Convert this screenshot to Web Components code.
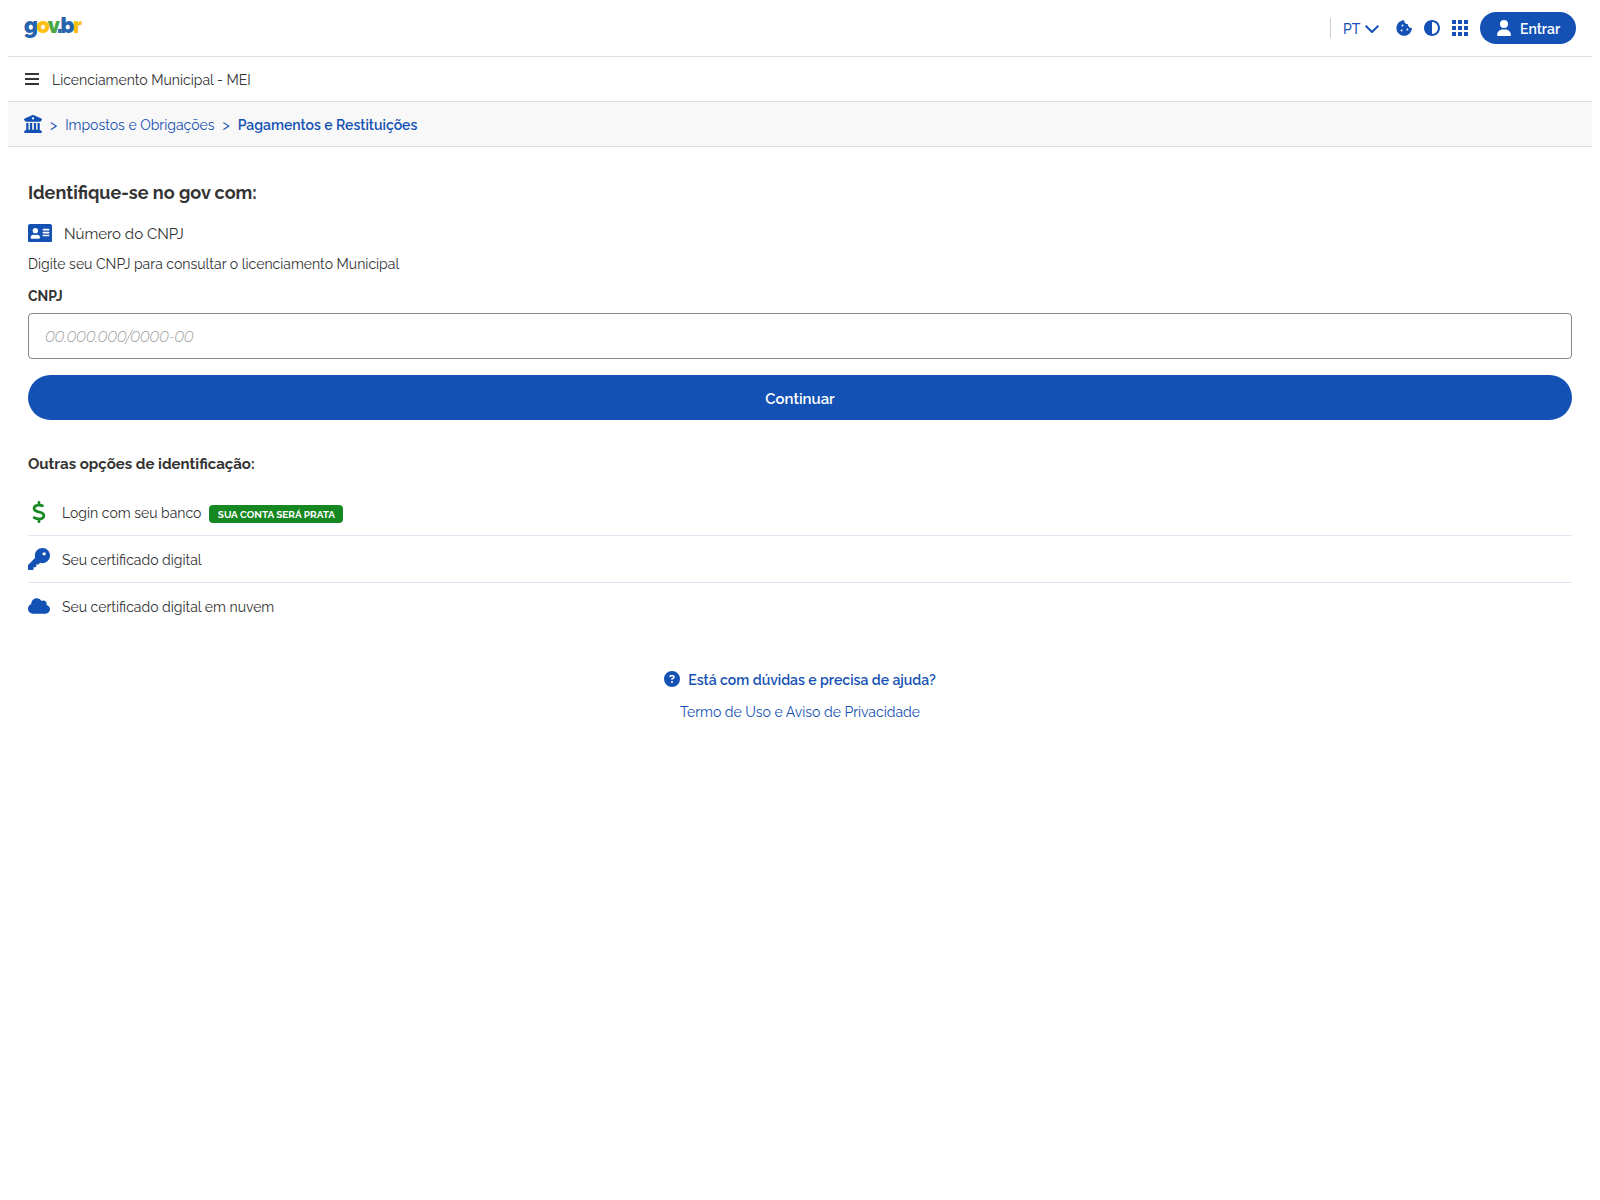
<!DOCTYPE html>
<html lang="pt-BR">
<head>
<meta charset="utf-8">
<title>Licenciamento Municipal - MEI</title>
<style>
    body {
        margin: 0 8px;
        background: #fff;
        color: #333;
        font-family: Raleway, Lato, "Open Sans", sans-serif;
        font-size: 14px;
        line-height: 20px;
        --blue: #1351b4;
        --green: #168821;
    }
</style>
</head>
<body>
<gov-header></gov-header>
<gov-title>Licenciamento Municipal - MEI</gov-title>
<gov-breadcrumb></gov-breadcrumb>
<gov-login></gov-login>
<gov-help></gov-help>

<script>
// viewBox + path of every icon used on the page
const ICONS = {
    bank: ['0 0 512 512', 'M243.4 2.6l-224 96c-14 6-21.8 21-18.7 35.8S16.8 160 32 160v8c0 13.3 10.7 24 24 24H456c13.3 0 24-10.7 24-24v-8c15.2 0 28.3-10.7 31.3-25.6s-4.8-29.9-18.7-35.8l-224-96c-8-3.4-17.2-3.4-25.2 0zM128 224H64V420.3c-.6 .3-1.2 .7-1.8 1.1l-48 32c-11.7 7.8-17 22.4-12.9 35.9S17.9 512 32 512H480c14.1 0 26.5-9.2 30.6-22.7s-1.1-28.1-12.9-35.9l-48-32c-.6-.4-1.2-.7-1.8-1.1V224H384V416H344V224H280V416H232V224H168V416H128V224zM256 64a32 32 0 1 1 0 64 32 32 0 1 1 0-64z'],
    menu: ['0 0 14 12', 'M0 0h14v2H0zM0 5h14v2H0zM0 10h14v2H0z'],
    cookie: ['-8 -8 528 528', 'M510.4 255.8c-69.1-.9-124.8-57.1-124.8-126.4-69.3 0-125.5-55.7-126.4-124.8-26.9-4.2-54.6.3-79 12.8l-69.1 35.2a132 132 0 0 0-57.8 57.9l-35.1 68.9a132.800 132.800 0 0 0-12.700 81.300l12.100 76.300a131.900 131.900 0 0 0 37.200 72.900l54.600 54.600a131.800 131.800 0 0 0 72.700 37.100l76.700 12.100a131.900 131.900 0 0 0 80.800-12.800l69.100-35.200a132 132 0 0 0 57.800-57.800l35.100-68.900a132.600 132.600 0 0 0 12.800-79.200zM176 368a32 32 0 1 1 0-64 32 32 0 0 1 0 64zm32-160a32 32 0 1 1 0-64 32 32 0 0 1 0 64zm160 128a32 32 0 1 1 0-64 32 32 0 0 1 0 64z'],
    contrast: ['8 8 496 496', 'M8 256c0 137 111 248 248 248s248-111 248-248S393 8 256 8 8 119 8 256zm248 184V72c101.700 0 184 82.300 184 184 0 101.700-82.300 184-184 184z'],
    grid: ['0 0 16 16', 'M0 0h4v4H0zM6 0h4v4H6zM12 0h4v4h-4zM0 6h4v4H0zM6 6h4v4H6zM12 6h4v4h-4zM0 12h4v4H0zM6 12h4v4H6zM12 12h4v4h-4z'],
    user: ['0 0 448 512', 'M224 256a128 128 0 1 0 0-256 128 128 0 1 0 0 256zm-45.700 48C79.800 304 0 383.800 0 482.300 0 498.700 13.300 512 29.700 512h388.600c16.400 0 29.700-13.300 29.700-29.700 0-98.500-79.800-178.300-178.300-178.300z'],
    card: ['0 0 576 448', 'M528 0H48C21.500 0 0 21.500 0 48v352c0 26.500 21.500 48 48 48h480c26.500 0 48-21.500 48-48V48c0-26.500-21.500-48-48-48zM176 96a64 64 0 1 1 0 128 64 64 0 0 1 0-128zm112 236.800c0 10.600-10 19.200-22.400 19.200H86.400C74 352 64 343.400 64 332.800v-19.200c0-31.800 30.100-57.600 67.200-57.600h5a103 103 0 0 0 79.600 0h5c37.100 0 67.200 25.800 67.200 57.600zM512 284a12 12 0 0 1-12 12H364a12 12 0 0 1-12-12v-16a12 12 0 0 1 12-12h136a12 12 0 0 1 12 12zm0-70a12 12 0 0 1-12 12H364a12 12 0 0 1-12-12v-16a12 12 0 0 1 12-12h136a12 12 0 0 1 12 12zm0-70a12 12 0 0 1-12 12H364a12 12 0 0 1-12-12v-16a12 12 0 0 1 12-12h136a12 12 0 0 1 12 12z'],
    dollar: ['0 0 320 512', 'M160 0c17.700 0 32 14.300 32 32v35.700c1.600.2 3.100.4 4.700.7.400.1.700.1 1.100.2l48 8.800c17.400 3.200 28.900 19.900 25.700 37.200s-19.900 28.900-37.200 25.700l-47.500-8.700c-31.300-4.600-58.900-1.500-78.300 6.200s-27.200 18.300-29 28.100c-2 10.700-.5 16.700 1.200 20.400 1.800 3.900 5.500 8.300 12.800 13.200 16.300 10.700 41.300 17.700 73.700 26.300l2.900.8c28.600 7.600 63.600 16.800 89.600 33.800 14.200 9.300 27.600 21.900 35.900 39.500 8.500 17.900 10.300 37.900 6.400 59.200-6.900 38-33.100 63.400-65.600 76.700-13.700 5.600-28.600 9.200-44.400 11V480c0 17.700-14.300 32-32 32s-32-14.300-32-32v-34.900c-.4-.1-.9-.1-1.300-.2h-.2c-24.400-3.800-64.500-14.300-91.500-26.300-16.100-7.200-23.400-26.100-16.200-42.200s26.100-23.400 42.200-16.200c20.900 9.300 55.300 18.500 75.200 21.600 31.900 4.700 58.200 2 76-5.300 16.900-6.900 24.600-16.900 26.800-28.900 1.900-10.600.4-16.700-1.300-20.400-1.900-4-5.600-8.400-13-13.300-16.400-10.700-41.500-17.700-74-26.300l-2.800-.7c-28.500-7.700-63.500-17-89.500-34-14.200-9.300-27.500-22-35.800-39.600-8.400-17.900-10.100-37.900-6.100-59.200C23.700 116 52.300 91.200 84.800 78.300c13.300-5.300 27.900-8.900 43.200-11V32c0-17.700 14.300-32 32-32z'],
    key: ['0 0 512 512', 'M336 352c97.200 0 176-78.800 176-176S433.200 0 336 0 160 78.800 160 176c0 18.700 2.900 36.800 8.300 53.700L7 391c-4.500 4.500-7 10.600-7 17v80c0 13.300 10.700 24 24 24h80c13.300 0 24-10.700 24-24v-40h40c13.300 0 24-10.700 24-24v-40h40c6.400 0 12.500-2.500 17-7l33.300-33.300c16.900 5.400 35 8.300 53.700 8.300zM376 96a40 40 0 1 1 0 80 40 40 0 1 1 0-80z'],
    cloud: ['0 0 640 448', 'M537.600 194.600c4.100-10.700 6.400-22.400 6.400-34.600 0-53-43-96-96-96-19.700 0-38.100 6-53.300 16.200C367 32.200 315.300 0 256 0 167.600 0 96 71.600 96 160c0 2.700.1 5.400.2 8.100C40.200 187.800 0 241.200 0 304c0 79.500 64.500 144 144 144h368c70.700 0 128-57.300 128-128 0-61.900-44-113.600-102.400-125.400z'],
    help: ['0 0 512 512', 'M256 0a256 256 0 1 0 0 512 256 256 0 0 0 0-512zM169.800 165.300c7.900-22.300 29.100-37.300 52.800-37.300h58.300c34.900 0 63.100 28.300 63.100 63.100 0 22.600-12.100 43.500-31.700 54.800L280 264.400c-.2 13-10.900 23.600-24 23.600-13.300 0-24-10.700-24-24v-13.500c0-8.600 4.600-16.500 12.100-20.800l44.300-25.400c4.700-2.700 7.600-7.700 7.600-13.100 0-8.400-6.800-15.100-15.100-15.100h-58.300c-3.400 0-6.400 2.100-7.500 5.300l-.4 1.200c-4.400 12.500-18.200 19-30.600 14.600s-19-18.200-14.600-30.600zM256 320a32 32 0 1 1 0 64 32 32 0 0 1 0-64z'],
};

/* <gov-icon name="..."> takes its size from the width/height set on it */
class GovIcon extends HTMLElement {
    constructor() {
        super();
        this.attachShadow({ mode: 'open' });
    }

    connectedCallback() {
        const [box, path] = ICONS[this.getAttribute('name')];
        this.shadowRoot.innerHTML = `
            <style>
                :host { display: block; flex: none; }
                svg { display: block; width: 100%; height: 100%; fill: currentColor; }
            </style>
            <svg viewBox="${box}"><path fill-rule="evenodd" d="${path}"/></svg>
        `;
    }
}

class GovHeader extends HTMLElement {
    constructor() {
        super();
        this.attachShadow({ mode: 'open' });
        this.shadowRoot.innerHTML = `
            <style>
                :host {
                    display: flex;
                    align-items: center;
                    height: 56px;
                    padding: 0 16px;
                    border-bottom: 1px solid #e0e0e0;
                    color: var(--blue);
                }
                .logo {
                    font-weight: 900;
                    font-size: 21.5px;
                    line-height: 28px;
                    letter-spacing: -1.5px;
                    margin: 0 auto 4px 0;
                    color: #2864ae;
                }
                .logo .y { color: #fdc010; }
                .logo .g { color: #4aa846; }
                .logo .dot { margin: 0 -0.5px 0 -1.3px; }
                .divider { width: 1px; height: 20px; background: #ccc; margin-right: 12px; }
                .lang { width: 17px; margin-top: 2px; font-weight: 500; }
                .chevron {
                    width: 14px; height: 8px; margin: 1px 17px 0 5px;
                    fill: none; stroke: currentColor; stroke-width: 2;
                }
                gov-icon { width: 16px; height: 16px; margin-right: 12px; }
                button {
                    display: flex;
                    align-items: center;
                    width: 96px;
                    height: 32px;
                    padding: 0 0 0 17px;
                    border: 0;
                    border-radius: 16px;
                    background: var(--blue);
                    color: #fff;
                    font: 600 14px/20px Raleway, Lato, sans-serif;
                }
                button gov-icon { width: 14px; margin-right: 9px; }
                button span { margin-top: 2px; }
            </style>
            <div class="logo"><span>g</span><span class="y">o</span><span class="g">v</span><span class="dot">.</span><span>b</span><span class="y">r</span></div>
            <div class="divider"></div>
            <span class="lang">PT</span>
            <svg class="chevron" viewBox="0 0 14 8"><path d="M.7.700 7 7 13.300.7"/></svg>
            <gov-icon name="cookie"></gov-icon>
            <gov-icon name="contrast"></gov-icon>
            <gov-icon name="grid"></gov-icon>
            <button><gov-icon name="user"></gov-icon><span>Entrar</span></button>
        `;
    }
}

class GovTitle extends HTMLElement {
    constructor() {
        super();
        this.attachShadow({ mode: 'open' });
        this.shadowRoot.innerHTML = `
            <style>
                :host {
                    display: flex;
                    align-items: center;
                    height: 44px;
                    padding: 0 17px;
                    border-bottom: 1px solid #e0e0e0;
                }
                gov-icon { width: 14px; height: 12px; margin-right: 13px; }
                span { margin-top: 2px; }
            </style>
            <gov-icon name="menu"></gov-icon>
            <span><slot></slot></span>
        `;
    }
}

class GovBreadcrumb extends HTMLElement {
    constructor() {
        super();
        this.attachShadow({ mode: 'open' });
        this.shadowRoot.innerHTML = `
            <style>
                :host {
                    display: flex;
                    align-items: center;
                    height: 44px;
                    padding: 0 16px;
                    border-bottom: 1px solid #e0e0e0;
                    background: #f8f8f8;
                    color: var(--blue);
                }
                gov-icon { width: 18px; height: 18px; }
                i, b, span { margin-top: 2px; }
                i { font-style: normal; margin-left: 8px; margin-right: 8px; }
                b { font-weight: 600; }
            </style>
            <gov-icon name="bank"></gov-icon>
            <i>&gt;</i><span>Impostos e Obrigações</span><i>&gt;</i><b>Pagamentos e Restituições</b>
        `;
    }
}

/* one line of the list of other ways to sign in */
class GovOption extends HTMLElement {
    constructor() {
        super();
        this.attachShadow({ mode: 'open' });
    }

    connectedCallback() {
        const badge = this.getAttribute('badge');
        this.shadowRoot.innerHTML = `
            <style>
                :host {
                    display: flex;
                    align-items: center;
                    height: 46px;
                    border-bottom: 1px solid #dfe6f1;
                    color: var(--blue);
                }
                :host(:last-of-type) { border-bottom: 0; }
                gov-icon { width: 22px; height: 22px; margin-right: 12px; }
                .text { color: #333; margin-top: 2px; }
                .badge {
                    box-sizing: border-box;
                    margin: 4px 0 0 8px;
                    width: 134px;
                    height: 18px;
                    padding-top: 1px;
                    border-radius: 4px;
                    background: var(--green);
                    color: #fff;
                    font-size: 10px;
                    font-weight: 700;
                    line-height: 18px;
                    text-align: center;
                }
            </style>
            <gov-icon name="${this.getAttribute('icon')}" style="${badge ? 'color: var(--green)' : ''}"></gov-icon>
            <span class="text"><slot></slot></span>
            ${badge ? `<span class="badge">${badge}</span>` : ''}
        `;
    }
}

class GovLogin extends HTMLElement {
    constructor() {
        super();
        this.attachShadow({ mode: 'open' });
        this.shadowRoot.innerHTML = `
            <style>
                :host { display: block; padding: 34px 20px 0; }
                h1, h2, p { margin: 0; }
                h1 { font-size: 18px; line-height: 24px; }
                h2 { font-size: 15px; line-height: 20px; margin: 34px 0 15px; }
                .method { display: flex; align-items: center; height: 24px; margin: 16px 0 9px; }
                .method gov-icon { width: 24px; height: 18.67px; margin-right: 12px; color: var(--blue); }
                .method span { font-size: 15px; margin-top: 2px; }
                label { display: block; margin: 12px 0 7px; font-weight: 700; }
                input {
                    display: block;
                    box-sizing: border-box;
                    width: 100%;
                    height: 46px;
                    padding: 0 16px;
                    border: 1px solid #888;
                    border-radius: 4px;
                    /* Raleway italic only has old-style digits */
                    font: 15px/20px Rawline, Montserrat, sans-serif;
                    letter-spacing: -0.3px;
                }
                input::placeholder { color: #999; font-style: italic; font-weight: 300; }
                button {
                    display: block;
                    width: 100%;
                    height: 45px;
                    margin-top: 16px;
                    padding: 2px 0 0;
                    border: 0;
                    border-radius: 23px;
                    background: var(--blue);
                    color: #fff;
                    font: 600 15px/20px Raleway, Lato, sans-serif;
                }
            </style>
            <h1>Identifique-se no gov com:</h1>
            <div class="method"><gov-icon name="card"></gov-icon><span>Número do CNPJ</span></div>
            <p>Digite seu CNPJ para consultar o licenciamento Municipal</p>
            <label for="cnpj">CNPJ</label>
            <input id="cnpj" placeholder="00.000.000/0000-00">
            <button>Continuar</button>
            <h2>Outras opções de identificação:</h2>
            <gov-option icon="dollar" badge="SUA CONTA SERÁ PRATA">Login com seu banco</gov-option>
            <gov-option icon="key">Seu certificado digital</gov-option>
            <gov-option icon="cloud">Seu certificado digital em nuvem</gov-option>
        `;
    }
}

class GovHelp extends HTMLElement {
    constructor() {
        super();
        this.attachShadow({ mode: 'open' });
        this.shadowRoot.innerHTML = `
            <style>
                :host {
                    display: flex;
                    flex-direction: column;
                    align-items: center;
                    gap: 12px;
                    padding-top: 40px;
                    color: var(--blue);
                }
                .help { display: flex; align-items: center; gap: 8px; height: 20px; font-weight: 600; }
                .help span { margin-top: 2px; }
                .terms { margin-top: 1px; }
                gov-icon { width: 16px; height: 16px; }
            </style>
            <div class="help"><gov-icon name="help"></gov-icon><span>Está com dúvidas e precisa de ajuda?</span></div>
            <span class="terms">Termo de Uso e Aviso de Privacidade</span>
        `;
    }
}

customElements.define('gov-icon', GovIcon);
customElements.define('gov-header', GovHeader);
customElements.define('gov-title', GovTitle);
customElements.define('gov-breadcrumb', GovBreadcrumb);
customElements.define('gov-option', GovOption);
customElements.define('gov-login', GovLogin);
customElements.define('gov-help', GovHelp);
</script>
</body>
</html>
